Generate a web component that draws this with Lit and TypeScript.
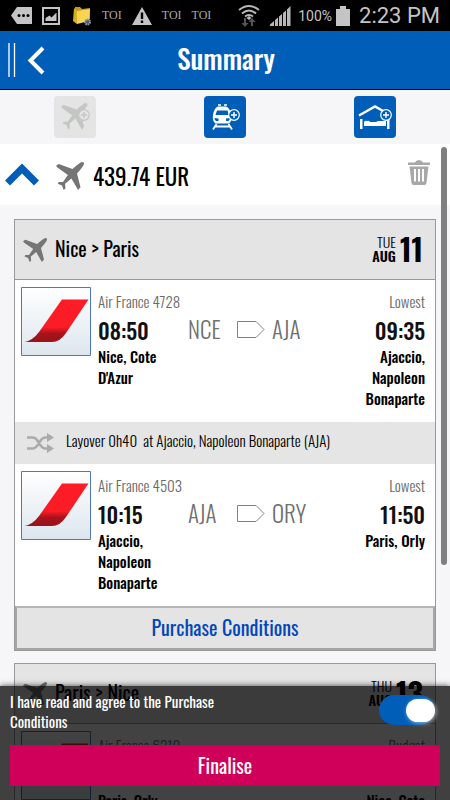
import { LitElement, html, css, svg } from "lit";
import { customElement, property } from "lit/decorators.js";

interface Leg {
  flight: string;
  fare: string;
  from: string;
  to: string;
  departs: string;
  arrives: string;
  fromCity: string;
  toCity: string;
}

interface Journey {
  title: string;
  weekday: string;
  month: string;
  day: string;
  legs: Leg[];
  layover?: string;
}

const JOURNEYS: Journey[] = [
  {
    title: "Nice > Paris",
    weekday: "TUE",
    month: "AUG",
    day: "11",
    layover: "Layover 0h40\u00a0 at Ajaccio, Napoleon Bonaparte (AJA)",
    legs: [
      { flight: "Air France 4728", fare: "Lowest", from: "NCE", to: "AJA", departs: "08:50", arrives: "09:35", fromCity: "Nice, Cote D'Azur", toCity: "Ajaccio, Napoleon Bonaparte" },
      { flight: "Air France 4503", fare: "Lowest", from: "AJA", to: "ORY", departs: "10:15", arrives: "11:50", fromCity: "Ajaccio, Napoleon Bonaparte", toCity: "Paris, Orly" },
    ],
  },
  {
    title: "Paris > Nice",
    weekday: "THU",
    month: "AUG",
    day: "13",
    legs: [
      { flight: "Air France 6210", fare: "Budget", from: "ORY", to: "NCE", departs: "07:15", arrives: "08:40", fromCity: "Paris, Orly", toCity: "Nice, Cote D'Azur" },
    ],
  },
];

const planePath =
  "M0 11 L8 6 L47 20 Q66 3 74 0 Q82 0 80 6 Q76 16 60 33 L70 72 L63 80 L44 47 L26 62 L27 76 L22 80 L17 67 L5 62 L8 57 L20 57 L34 37 L4 16Z";

const plane = (size: number) => html`
  <svg width=${size} height=${size} viewBox="0 0 80 80" aria-hidden="true">
    <path d=${planePath} fill="#757575" />
  </svg>
`;

const plusBadge = (line: string, fill: string) => svg`
  <circle cx="32" cy="19" r="5.3" fill=${fill} stroke=${line} stroke-width="1.2" />
  <path d="M29 19h6M32 16v6" stroke=${line} stroke-width="1.4" />
`;

@customElement("status-bar")
export class StatusBar extends LitElement {
  static styles = css`
    :host {
      display: flex;
      align-items: center;
      height: 31px;
      padding: 0 10px 0 11px;
      background: #000;
      color: #c4c4c4;
      font-family: Roboto, "Liberation Sans", sans-serif;
    }
    .toi {
      font: 12px/31px "Liberation Serif", serif;
      margin-left: 10px;
      color: #aaa;
    }
    .icon {
      margin-left: 10px;
    }
    .spacer {
      flex: 1;
    }
    .charge {
      font-size: 14px;
      margin: 0 4px 0 7px;
    }
    .clock {
      font-size: 22px;
      margin-left: 9px;
    }
  `;

  render() {
    return html`
      <svg width="21" height="17" viewBox="0 0 21 17" aria-hidden="true">
        <path d="M6 0H21V17H6L0 8.500Z" fill="#c4c4c4" />
        <circle cx="8" cy="8.500" r="1.500" /><circle cx="12.500" cy="8.500" r="1.500" /><circle cx="17" cy="8.500" r="1.500" />
      </svg>
      <svg class="icon" width="18" height="18" viewBox="0 0 18 18" aria-hidden="true">
        <path d="M1 1h16v16H1z" fill="none" stroke="#c4c4c4" stroke-width="2" />
        <path d="M3.500 14V11l4-2.500 2 2 5-5V14z" fill="#c4c4c4" />
      </svg>
      <svg class="icon" width="22" height="22" viewBox="-2 0 22 22" aria-hidden="true">
        <path d="M3 2h5l2 2 8-1v11L3 18z" fill="#c8971c" />
        <path d="M5 6l13-2-1 12-12 3z" fill="#f6d653" />
        <path d="M2 3l3 3v13l-4-3z" fill="#dcae25" />
        <circle cx="15.500" cy="17" r="2.500" fill="#556" stroke="#8a98a8" stroke-width="2" stroke-dasharray="1.500 .7" />
      </svg>
      <span class="toi">TOI</span>
      <svg class="icon" width="20" height="18" viewBox="0 0 20 18" aria-hidden="true">
        <path d="M10 0L20 18H0z" fill="#c4c4c4" />
        <path d="M10 5.500v6.500M10 13.500v2.500" stroke="#000" stroke-width="2.400" />
      </svg>
      <span class="toi">TOI</span>
      <span class="toi">TOI</span>
      <span class="spacer"></span>
      <svg width="22" height="24" viewBox="0 0 22 24" aria-hidden="true">
        <g fill="none" stroke="#b8b8b8" stroke-width="2">
          <path d="M1 6Q11-2 21 6M4 9.500Q11 3.500 18 9.500M7 12.500Q11 9.500 15 12.500" />
        </g>
        <path d="M8.500 14L11 12l2.500 2-2.500 2z" fill="#b8b8b8" />
        <path d="M8 14v5h2.500L7 23l-3.500-4H6v-5zM13 22v-4h-2.500L14 14l3.500 4H15v4z" fill="#555" />
      </svg>
      <svg class="icon" width="21" height="20" viewBox="0 0 21 20" aria-hidden="true">
        <path d="M0 20V18.500L4 15V20zM5 20V14l3-2.500V20zM9 20V10.500L12 8V20zM13 20V7l3-2.500V20zM17 20V3.500L20.500 0V20z" fill="#b8b8b8" />
      </svg>
      <span class="charge">100%</span>
      <svg width="14" height="20" viewBox="0 0 14 20" aria-hidden="true">
        <path d="M0 3H4V0h6V3h4V20H0z" fill="#c4c4c4" />
      </svg>
      <span class="clock">2:23 PM</span>
    `;
  }
}

@customElement("flight-leg")
export class FlightLeg extends LitElement {
  @property({ attribute: false }) leg!: Leg;

  static styles = css`
    :host {
      display: flex;
      gap: 7px;
      min-height: 142px;
      box-sizing: border-box;
      padding: 7px 10px 8px 6px;
      background: #fff;
    }
    .logo {
      flex: none;
    }
    .details {
      flex: 1;
      display: grid;
      grid-template-columns: 90px 1fr 80px;
      grid-template-rows: 28px 31px auto;
      align-items: center;
      align-content: start;
    }
    .muted {
      color: #6a6a6a;
      font-size: 15px;
      font-weight: 350;
      line-height: 28px;
    }
    .flight {
      grid-column: 1 / 3;
    }
    .end {
      text-align: right;
    }
    .time {
      font-size: 22px;
      line-height: 31px;
      font-weight: 500;
      color: #111;
    }
    .route {
      display: flex;
      align-items: center;
      font-size: 23px;
      line-height: 24px;
      font-weight: 350;
      padding-bottom: 3px;
      color: #707070;
    }
    .origin {
      width: 49px;
    }
    .arrow {
      margin-right: 7px;
    }
    .city {
      font-size: 15px;
      line-height: 21px;
      font-weight: 500;
      align-self: start;
      width: 72px;
    }
    .city.end {
      grid-column: 3;
      justify-self: end;
    }
  `;

  render() {
    const l = this.leg;
    return html`
      <svg class="logo" width="70" height="69" viewBox="0 0 70 69" role="img" aria-label="Air France">
        <defs>
          <linearGradient id="sky" x2="0" y2="1">
            <stop offset="0" stop-color="#fff" />
            <stop offset="1" stop-color="#dde6ee" />
          </linearGradient>
          <linearGradient id="red" x2="0" y2="1">
            <stop offset="0.650" stop-color="#fc1c26" />
            <stop offset="0.800" stop-color="#a8131b" />
            <stop offset="1" stop-color="#99131a" />
          </linearGradient>
        </defs>
        <path d="M.5.5h69v68h-69z" fill="url(#sky)" stroke="#4f77b5" />
        <path d="M41 12.500H67.500L45 46Q39 55 31 55H4Q12 53 18 45z" fill="url(#red)" />
      </svg>
      <div class="details">
        <span class="muted flight">${l.flight}</span>
        <span class="muted end">${l.fare}</span>
        <span class="time">${l.departs}</span>
        <span class="route">
          <span class="origin">${l.from}</span>
          <svg class="arrow" width="28" height="17" viewBox="0 0 28 17" aria-hidden="true">
            <path d="M.5.5H19L27 8.500 19 16.500H.5z" fill="none" stroke="#808080" />
          </svg>
          <span>${l.to}</span>
        </span>
        <span class="time end">${l.arrives}</span>
        <span class="city">${l.fromCity}</span>
        <span class="city end">${l.toCity}</span>
      </div>
    `;
  }
}

@customElement("journey-card")
export class JourneyCard extends LitElement {
  @property({ attribute: false }) journey!: Journey;

  static styles = css`
    :host {
      display: block;
      border: 1px solid #999;
      background: #fff;
    }
    .head {
      display: flex;
      align-items: center;
      height: 59px;
      padding: 0 12px 0 8px;
      background: #e4e4e4;
      border-bottom: 1px solid #999;
    }
    h2 {
      flex: 1;
      margin: 0 0 0 8px;
      padding-bottom: 4px;
      font-size: 20px;
      font-weight: normal;
    }
    .date {
      font-size: 14px;
      font-weight: 350;
      line-height: 14px;
      text-align: right;
      padding-bottom: 2px;
    }
    .month {
      display: block;
      font-weight: 600;
    }
    .day {
      margin-left: 4px;
      padding-bottom: 2px;
      font-size: 30px;
      font-weight: 700;
      line-height: 40px;
    }
    .layover {
      display: flex;
      align-items: center;
      gap: 11px;
      height: 42px;
      padding: 0 12px;
      background: #e5e5e5;
      font-size: 15px;
      font-weight: 350;
    }
    .layover span {
      padding-bottom: 6px;
    }
    button {
      display: block;
      width: 100%;
      height: 44px;
      border: 2px solid #a6a6a6;
      border-top-color: #b5b5b5;
      border-radius: 0;
      padding: 0 0 2px;
      background: #e4e4e4;
      color: #0047ba;
      font-family: inherit;
      font-size: 20px;
    }
  `;

  render() {
    const j = this.journey;
    return html`
      <div class="head">
        ${plane(24)}
        <h2>${j.title}</h2>
        <div class="date">${j.weekday}<span class="month">${j.month}</span></div>
        <span class="day">${j.day}</span>
      </div>
      ${j.legs.map(
        (leg, i) => html`
          ${i > 0
            ? html`<div class="layover">
                <svg width="28" height="20" viewBox="0 0 28 20" aria-hidden="true">
                  <path d="M0 4.500H6Q8 4.500 10 7L14 13Q16 15.500 18 15.500H21M0 15.500H6Q8 15.500 10 13L14 7Q16 4.500 18 4.500H21" fill="none" stroke="#aaa" stroke-width="2.600" />
                  <path d="M20 0L27 4.500 20 9zM20 11L27 15.500 20 20z" fill="#aaa" />
                </svg>
                <span>${j.layover}</span>
              </div>`
            : null}
          <flight-leg .leg=${leg}></flight-leg>
        `
      )}
      <button type="button">Purchase Conditions</button>
    `;
  }
}

@customElement("app-root")
export class AppRoot extends LitElement {
  static styles = css`
    :host {
      display: flex;
      flex-direction: column;
      position: relative;
      height: 100vh;
      overflow: hidden;
      background: #f6f6f9;
      color: #000;
      font-family: Oswald, Roboto, "Liberation Sans", sans-serif;
    }
    button {
      border: 0;
      padding: 0;
      font-family: inherit;
      background: none;
    }
    svg {
      display: block;
    }
    .header {
      display: grid;
      grid-template-columns: 48px 1fr 48px;
      align-items: center;
      height: 58px;
      flex: none;
      background: #005eb8;
      border-bottom: 1px solid #000;
      color: #fff;
    }
    h1 {
      margin: 0;
      padding: 0 0 4px 2px;
      text-align: center;
      font-size: 27px;
      line-height: 40px;
      font-weight: 500;
    }
    .back {
      padding-left: 8px;
    }
    .tools {
      display: grid;
      grid-template-columns: repeat(3, 1fr);
      place-items: center;
      height: 54px;
      flex: none;
    }
    .tool {
      width: 42px;
      height: 42px;
      border-radius: 4px;
      background: #005eb8;
    }
    .tool:disabled {
      background: #e4e4e4;
    }
    .body {
      position: relative;
      flex: 1;
      min-height: 0;
      overflow: hidden;
    }
    .total {
      display: flex;
      align-items: center;
      height: 61px;
      padding: 0 20px 0 5px;
      background: #fff;
    }
    .amount {
      flex: 1;
      font-size: 23px;
      margin-left: 9px;
      padding-top: 2px;
    }
    .total .mark {
      margin: 2px 0 0 17px;
    }
    .trash {
      padding-bottom: 4px;
    }
    .cards {
      display: flex;
      flex-direction: column;
      gap: 12px;
      padding: 14px;
    }
    .thumb {
      position: absolute;
      top: 3px;
      right: 3px;
      width: 6px;
      height: 418px;
      border-radius: 3px;
      background: #808080;
    }
    .footer {
      position: absolute;
      left: 0;
      right: 0;
      bottom: 0;
      padding: 5px 10px 14px;
      background: rgba(0, 0, 0, 0.74);
      box-shadow: 0 0 6px rgba(0, 0, 0, 0.7);
      color: #fff;
    }
    .agree {
      display: flex;
      justify-content: space-between;
      align-items: flex-start;
      height: 54px;
      padding-right: 5px;
      font-size: 15px;
      line-height: 20px;
    }
    .agree span {
      max-width: 220px;
    }
    .switch {
      appearance: none;
      display: flex;
      align-items: center;
      justify-content: flex-end;
      width: 56px;
      height: 30px;
      margin: 4px 0 0;
      border-radius: 15px;
      background: #005eb8;
    }
    .switch::before {
      content: "";
      width: 29px;
      height: 23px;
      border-radius: 12px;
      background: #fff;
      box-shadow: 1px 1px 4px rgba(255, 255, 255, 0.6);
    }
    .switch:not(:checked) {
      justify-content: flex-start;
      background: #777;
    }
    .finalise {
      display: block;
      width: 100%;
      height: 41px;
      padding-bottom: 2px;
      background: #d0005a;
      color: #fff;
      font-size: 20px;
      font-weight: 400;
    }
  `;

  render() {
    return html`
      <status-bar></status-bar>
      <header class="header">
        <button class="back" type="button" aria-label="Back">
          <svg width="37" height="34" viewBox="0 0 37 34" aria-hidden="true">
            <path d="M1 0V34M6.500 0V34" stroke="#fff" stroke-width="1.300" />
            <path d="M35 5L22.500 17.500 35 30" fill="none" stroke="#fff" stroke-width="4" />
          </svg>
        </button>
        <h1>Summary</h1>
      </header>
      <nav class="tools">
        <button class="tool" type="button" disabled aria-label="Add flight">
          <svg width="42" height="42" viewBox="0 0 42 42" aria-hidden="true">
            <path d=${planePath} transform="translate(7 7) scale(.33)" fill="#c3c6c3" />
            <g transform="translate(-2 0)">${plusBadge("#c3c6c3", "#e4e4e4")}</g>
          </svg>
        </button>
        <button class="tool" type="button" aria-label="Add train">
          <svg width="42" height="42" viewBox="0 0 42 42" aria-hidden="true">
            <path d="M14 10.500H22Q26 12 27.500 19Q28.500 25 25 27.500H11.500Q8 25 9 19Q10 12 14 10.500z" fill="#fff" />
            <path d="M13 14.500H23.500L25 19H11.500zM10.500 22l4 .5v2.500h-2.500q-1.500-1-1.500-3zM26 22l-4 .5v2.500h2.500q1.500-1 1.500-3z" fill="#005eb8" />
            <path d="M14 9h3M20 9h3" stroke="#fff" stroke-width="1.600" />
            <path d="M12.500 28L9 33.500M24.500 28l3.500 5.500M11 30.500h15" fill="none" stroke="#fff" stroke-width="1.800" />
            <g transform="translate(-2 0)">${plusBadge("#fff", "#005eb8")}</g>
          </svg>
        </button>
        <button class="tool" type="button" aria-label="Add hotel">
          <svg width="42" height="42" viewBox="0 0 42 42" aria-hidden="true">
            <path d="M5 19.500L21 10.500 36 19" fill="none" stroke="#fff" stroke-width="2.400" />
            <path d="M6 23h2.500v10H6zM33 23h2.500v10H33zM10 30V26q1-2 3-1 2-1 3 1h6l2-1h8v5z" fill="#fff" />
            ${plusBadge("#fff", "#005eb8")}
          </svg>
        </button>
      </nav>
      <main class="body">
        <div class="total">
          <button type="button" aria-label="Collapse">
            <svg width="34" height="23" viewBox="0 0 34 23" aria-hidden="true">
              <path d="M2.500 20L17 5.500 31.500 20" fill="none" stroke="#005eb8" stroke-width="7" />
            </svg>
          </button>
          <span class="mark">${plane(28)}</span>
          <span class="amount">439.74 EUR</span>
          <button class="trash" type="button" aria-label="Delete">
            <svg width="22" height="25" viewBox="0 0 22 25" aria-hidden="true">
              <path d="M0 2.500H7Q8 0 11 0t4 2.500H22V5H0zM1.500 6.500h19L18.500 23Q18 25 16.500 25h-11Q4 25 3.500 23z" fill="#a8a8a8" />
              <path d="M7 9v12.500M11 9v12.500M15 9v12.500" stroke="#fff" stroke-width="2" />
            </svg>
          </button>
        </div>
        <div class="cards">
          ${JOURNEYS.map((j) => html`<journey-card .journey=${j}></journey-card>`)}
        </div>
        <div class="thumb"></div>
      </main>
      <footer class="footer">
        <label class="agree">
          <span>I have read and agree to the Purchase Conditions</span>
          <input class="switch" type="checkbox" role="switch" checked />
        </label>
        <button class="finalise" type="button">Finalise</button>
      </footer>
    `;
  }
}
